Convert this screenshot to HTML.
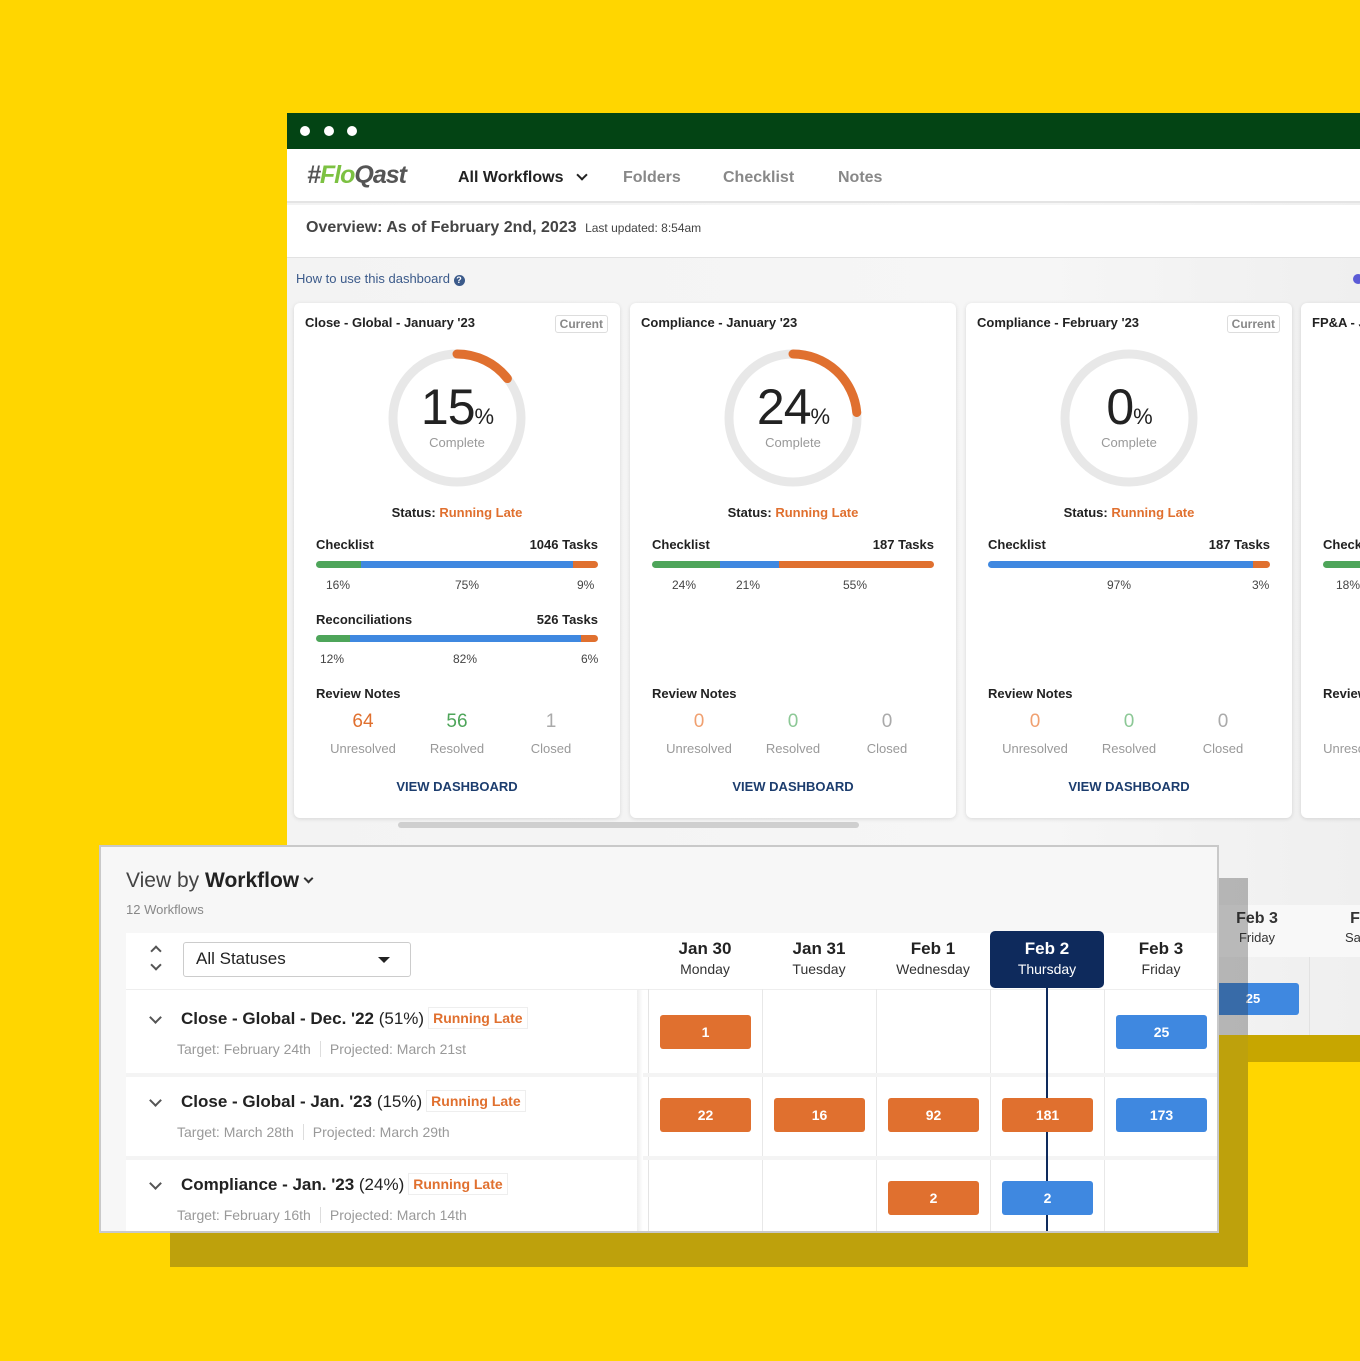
<!DOCTYPE html>
<html><head><meta charset="utf-8"><style>
*{margin:0;padding:0;box-sizing:border-box}
body{width:1360px;height:1361px;background:#FFD600;font-family:"Liberation Sans",sans-serif;position:relative;overflow:hidden;color:#222}
.a{position:absolute}
.win{left:287px;top:113px;width:1073px;height:922px;background:linear-gradient(90deg,#f3f3f3,#f6f6f6 70%,#efefef);overflow:hidden}
.card{position:absolute;top:190px;width:326px;height:515px;background:#fff;border-radius:6px;box-shadow:0 1px 4px rgba(0,0,0,.12)}
.card .t{position:absolute;left:11px;top:12px;font-size:13px;font-weight:bold;color:#222}
.cur{position:absolute;right:12px;top:12px;font-size:12px;font-weight:bold;color:#888;border:1px solid #ddd;border-radius:3px;padding:1px 4px}
.big{position:absolute;left:0;width:326px;text-align:center;top:75px;font-size:50px;color:#222;letter-spacing:-1px}
.big span{font-size:22px}
.cmp{position:absolute;left:0;width:326px;text-align:center;top:132px;font-size:13px;color:#999}
.st{position:absolute;left:0;width:326px;text-align:center;top:202px;font-size:13px;font-weight:bold;color:#222}
.or{color:#e0702f}
.lbl{position:absolute;left:22px;right:22px;font-size:13px;font-weight:bold;color:#222}
.lbl b{position:absolute;right:0;top:0}
.bar{position:absolute;left:22px;width:282px;height:7px;border-radius:4px;overflow:hidden;display:flex}
.g{background:#4ea55a}.b{background:#3f88e0}.o{background:#e0702f}
.pc{position:absolute;font-size:12px;color:#444}
.num{position:absolute;width:100px;text-align:center;font-size:19px;top:408px}
.nl{position:absolute;width:100px;text-align:center;font-size:13px;color:#999;top:438px}
.vd{position:absolute;left:0;width:326px;text-align:center;top:476px;font-size:13px;font-weight:bold;color:#1c3d6e}
.panel{left:99px;top:845px;width:1120px;height:388px;background:#f7f7f7;border:2px solid #c9c9c9;overflow:hidden}
.col{position:absolute;top:86px;width:114px;text-align:center}
.col .d{font-size:17px;font-weight:bold;color:#222;margin-top:6px}
.col .w{font-size:14px;color:#333;margin-top:2px}
.pill{position:absolute;width:91px;height:34px;border-radius:3px;color:#fff;font-weight:bold;font-size:14px;text-align:center;line-height:34px}
.rt{position:absolute;left:80px;font-size:17px;color:#222}
.rt b{font-weight:bold}
.rl{display:inline-block;font-size:14px;font-weight:bold;color:#e0702f;border:1px solid #eee;padding:2px 4px;margin-left:4px;vertical-align:1px}
.rs{position:absolute;left:76px;font-size:14px;color:#999}
.rs i{font-style:normal;border-left:1px solid #ddd;margin:0 9px}
.chev{position:absolute;left:50px;width:9px;height:9px;border-right:2px solid #555;border-bottom:2px solid #555;transform:rotate(45deg)}
</style></head><body>

<div class="a win">
  <div class="a" style="left:0;top:0;width:1073px;height:36px;background:#034414"></div>
  <div class="a" style="left:13px;top:13px;width:10px;height:10px;border-radius:50%;background:#fff"></div>
  <div class="a" style="left:37px;top:13px;width:10px;height:10px;border-radius:50%;background:#fff"></div>
  <div class="a" style="left:60px;top:13px;width:10px;height:10px;border-radius:50%;background:#fff"></div>
  <div class="a" style="left:0;top:36px;width:1073px;height:54px;background:#fff;border-bottom:2px solid #e4e4e4"></div>
  <div class="a" style="left:20px;top:48px;font-size:25px;font-weight:bold;font-style:italic;letter-spacing:-1px;color:#555">#<span style="color:#7cc142">Flo</span>Qast</div>
  <div class="a" style="left:171px;top:56px;font-size:16px;font-weight:bold;color:#222">All Workflows</div>
  <div class="a" style="left:291px;top:58px;width:8px;height:8px;border-right:2px solid #222;border-bottom:2px solid #222;transform:rotate(45deg)"></div>
  <div class="a" style="left:336px;top:56px;font-size:16px;font-weight:bold;color:#888">Folders</div>
  <div class="a" style="left:436px;top:56px;font-size:16px;font-weight:bold;color:#888">Checklist</div>
  <div class="a" style="left:551px;top:56px;font-size:16px;font-weight:bold;color:#888">Notes</div>
  <div class="a" style="left:0;top:92px;width:1073px;height:53px;background:#fff;border-bottom:1px solid #e2e2e2"></div>
  <div class="a" style="left:19px;top:106px;font-size:16px;font-weight:bold;color:#444">Overview: As of February 2nd, 2023 <span style="font-size:12px;font-weight:normal;color:#444;margin-left:4px">Last updated: 8:54am</span></div>
  <div class="a" style="left:9px;top:158px;font-size:13px;color:#3b5a8a">How to use this dashboard <span style="display:inline-block;width:11px;height:11px;border-radius:50%;background:#3b5a8a;color:#fff;font-size:9px;text-align:center;line-height:11px;font-weight:bold">?</span></div>
  <div class="a" style="left:1066px;top:161px;width:10px;height:10px;border-radius:50%;background:#5b5bd6"></div>

  <!-- card 1 -->
  <div class="card" style="left:7px">
    <div class="t">Close - Global - January '23</div><div class="cur">Current</div>
    <svg class="a" style="left:93px;top:45px" width="140" height="140"><circle cx="70" cy="70" r="64" fill="none" stroke="#e8e8e8" stroke-width="9"/><circle cx="70" cy="70" r="64" fill="none" stroke="#e0702f" stroke-width="9" stroke-linecap="round" stroke-dasharray="58 400" transform="rotate(-90 70 70)"/></svg>
    <div class="big">15<span>%</span></div><div class="cmp">Complete</div>
    <div class="st">Status: <span class="or">Running Late</span></div>
    <div class="lbl" style="top:234px">Checklist<b>1046 Tasks</b></div>
    <div class="bar" style="top:258px"><div class="g" style="width:16%"></div><div class="b" style="width:75%"></div><div class="o" style="width:9%"></div></div>
    <div class="pc" style="left:32px;top:275px">16%</div><div class="pc" style="left:161px;top:275px">75%</div><div class="pc" style="left:283px;top:275px">9%</div>
    <div class="lbl" style="top:309px">Reconciliations<b>526 Tasks</b></div>
    <div class="bar" style="top:332px"><div class="g" style="width:12%"></div><div class="b" style="width:82%"></div><div class="o" style="width:6%"></div></div>
    <div class="pc" style="left:26px;top:349px">12%</div><div class="pc" style="left:159px;top:349px">82%</div><div class="pc" style="left:287px;top:349px">6%</div>
    <div class="lbl" style="top:383px">Review Notes</div>
    <div class="num" style="left:19px;color:#e0702f">64</div><div class="num" style="left:113px;color:#4ea55a">56</div><div class="num" style="left:207px;color:#aaa">1</div>
    <div class="nl" style="left:19px">Unresolved</div><div class="nl" style="left:113px">Resolved</div><div class="nl" style="left:207px">Closed</div>
    <div class="vd">VIEW DASHBOARD</div>
  </div>
  <!-- card 2 -->
  <div class="card" style="left:343px">
    <div class="t">Compliance - January '23</div>
    <svg class="a" style="left:93px;top:45px" width="140" height="140"><circle cx="70" cy="70" r="64" fill="none" stroke="#e8e8e8" stroke-width="9"/><circle cx="70" cy="70" r="64" fill="none" stroke="#e0702f" stroke-width="9" stroke-linecap="round" stroke-dasharray="95 400" transform="rotate(-90 70 70)"/></svg>
    <div class="big">24<span>%</span></div><div class="cmp">Complete</div>
    <div class="st">Status: <span class="or">Running Late</span></div>
    <div class="lbl" style="top:234px">Checklist<b>187 Tasks</b></div>
    <div class="bar" style="top:258px"><div class="g" style="width:24%"></div><div class="b" style="width:21%"></div><div class="o" style="width:55%"></div></div>
    <div class="pc" style="left:42px;top:275px">24%</div><div class="pc" style="left:106px;top:275px">21%</div><div class="pc" style="left:213px;top:275px">55%</div>
    <div class="lbl" style="top:383px">Review Notes</div>
    <div class="num" style="left:19px;color:#f0a070">0</div><div class="num" style="left:113px;color:#8cc896">0</div><div class="num" style="left:207px;color:#aaa">0</div>
    <div class="nl" style="left:19px">Unresolved</div><div class="nl" style="left:113px">Resolved</div><div class="nl" style="left:207px">Closed</div>
    <div class="vd">VIEW DASHBOARD</div>
  </div>
  <!-- card 3 -->
  <div class="card" style="left:679px">
    <div class="t">Compliance - February '23</div><div class="cur">Current</div>
    <svg class="a" style="left:93px;top:45px" width="140" height="140"><circle cx="70" cy="70" r="64" fill="none" stroke="#e8e8e8" stroke-width="9"/></svg>
    <div class="big">0<span>%</span></div><div class="cmp">Complete</div>
    <div class="st">Status: <span class="or">Running Late</span></div>
    <div class="lbl" style="top:234px">Checklist<b>187 Tasks</b></div>
    <div class="bar" style="top:258px"><div class="b" style="width:94%"></div><div class="o" style="width:6%"></div></div>
    <div class="pc" style="left:141px;top:275px">97%</div><div class="pc" style="left:286px;top:275px">3%</div>
    <div class="lbl" style="top:383px">Review Notes</div>
    <div class="num" style="left:19px;color:#f0a070">0</div><div class="num" style="left:113px;color:#8cc896">0</div><div class="num" style="left:207px;color:#aaa">0</div>
    <div class="nl" style="left:19px">Unresolved</div><div class="nl" style="left:113px">Resolved</div><div class="nl" style="left:207px">Closed</div>
    <div class="vd">VIEW DASHBOARD</div>
  </div>
  <!-- card 4 -->
  <div class="card" style="left:1014px">
    <div class="t">FP&amp;A - January '23</div>
    <div class="lbl" style="top:234px">Checklist</div>
    <div class="bar" style="top:258px"><div class="g" style="width:18%"></div><div class="b" style="width:70%"></div></div>
    <div class="pc" style="left:35px;top:275px">18%</div>
    <div class="lbl" style="top:383px">Review Notes</div>
    <div class="nl" style="left:5px">Unresolved</div>
  </div>
  <div class="a" style="left:111px;top:709px;width:461px;height:6px;border-radius:3px;background:#cfcfcf"></div>

  <!-- lower calendar behind -->
  <div class="a" style="left:900px;top:792px;width:173px;height:52px;background:#f8f8f8"></div>
  <div class="a" style="left:912px;top:797px;width:116px;text-align:center;font-size:16px;font-weight:bold;color:#333">Feb 3<div style="font-size:13px;font-weight:normal;margin-top:2px">Friday</div></div>
  <div class="a" style="left:1026px;top:797px;width:116px;text-align:center;font-size:16px;font-weight:bold;color:#333">Feb 4<div style="font-size:13px;font-weight:normal;margin-top:2px">Saturday</div></div>
  <div class="a" style="left:1022px;top:844px;width:1px;height:78px;background:#e2e2e2"></div>
  <div class="a" style="left:920px;top:870px;width:92px;height:32px;border-radius:3px;background:#3f88e0;color:#fff;font-weight:bold;font-size:13px;text-align:center;line-height:32px">25</div>
</div>
<div class="a" style="left:1248px;top:1035px;width:112px;height:27px;background:rgba(70,55,0,.3)"></div>
<div class="a" style="left:170px;top:878px;width:1078px;height:389px;background:rgba(40,40,40,.3)"></div>

<!-- bottom panel -->
<div class="a panel">
  <div class="a" style="left:25px;top:22px;font-size:21px;color:#444">View by <b style="color:#222">Workflow</b> <span style="display:inline-block;width:7px;height:7px;border-right:2px solid #333;border-bottom:2px solid #333;transform:rotate(45deg);vertical-align:5px"></span></div>
  <div class="a" style="left:25px;top:55px;font-size:13px;color:#888">12 Workflows</div>
  <div class="a" style="left:25px;top:86px;width:1095px;height:300px;background:#fff"></div>
  <div class="a" style="left:51px;top:100px;width:8px;height:8px;border-left:2px solid #555;border-top:2px solid #555;transform:rotate(45deg)"></div>
  <div class="a" style="left:51px;top:114px;width:8px;height:8px;border-right:2px solid #555;border-bottom:2px solid #555;transform:rotate(45deg)"></div>
  <div class="a" style="left:82px;top:95px;width:228px;height:35px;border:1px solid #ccc;border-radius:3px;font-size:17px;color:#222;padding:6px 12px">All Statuses<span style="position:absolute;right:20px;top:14px;border-left:6px solid transparent;border-right:6px solid transparent;border-top:6px solid #222"></span></div>
  <div class="a" style="left:25px;top:142px;width:1095px;height:1px;background:#eee"></div>
  <!-- grid -->
  <div class="a" style="left:547px;top:142px;width:1px;height:250px;background:#e4e4e4"></div>
  <div class="a" style="left:661px;top:142px;width:1px;height:250px;background:#e8e8e8"></div>
  <div class="a" style="left:775px;top:142px;width:1px;height:250px;background:#e8e8e8"></div>
  <div class="a" style="left:889px;top:142px;width:1px;height:250px;background:#e8e8e8"></div>
  <div class="a" style="left:1003px;top:142px;width:1px;height:250px;background:#e8e8e8"></div>
  <div class="a" style="left:25px;top:226px;width:1095px;height:4px;background:#f4f4f4"></div>
  <div class="a" style="left:25px;top:309px;width:1095px;height:4px;background:#f4f4f4"></div>
  <div class="a" style="left:536px;top:143px;width:6px;height:250px;background:linear-gradient(90deg,#eee,#fff)"></div>
  <div class="col" style="left:547px"><div class="d">Jan 30</div><div class="w">Monday</div></div>
  <div class="col" style="left:661px"><div class="d">Jan 31</div><div class="w">Tuesday</div></div>
  <div class="col" style="left:775px"><div class="d">Feb 1</div><div class="w">Wednesday</div></div>
  <div class="a" style="left:889px;top:84px;width:114px;height:57px;background:#0e2a5c;border-radius:5px"></div>
  <div class="col" style="left:889px"><div class="d" style="color:#fff">Feb 2</div><div class="w" style="color:#fff">Thursday</div></div>
  <div class="col" style="left:1003px"><div class="d">Feb 3</div><div class="w">Friday</div></div>
  <div class="a" style="left:945px;top:141px;width:2px;height:250px;background:#0e2a5c"></div>
  <!-- rows -->
  <div class="chev" style="top:166px"></div>
  <div class="rt" style="top:160px"><b>Close - Global - Dec. '22</b> (51%)<span class="rl">Running Late</span></div>
  <div class="rs" style="top:194px">Target: February 24th<i></i>Projected: March 21st</div>
  <div class="chev" style="top:249px"></div>
  <div class="rt" style="top:243px"><b>Close - Global - Jan. '23</b> (15%)<span class="rl">Running Late</span></div>
  <div class="rs" style="top:277px">Target: March 28th<i></i>Projected: March 29th</div>
  <div class="chev" style="top:332px"></div>
  <div class="rt" style="top:326px"><b>Compliance - Jan. '23</b> (24%)<span class="rl">Running Late</span></div>
  <div class="rs" style="top:360px">Target: February 16th<i></i>Projected: March 14th</div>
  <div class="pill o" style="left:559px;top:168px">1</div>
  <div class="pill b" style="left:1015px;top:168px">25</div>
  <div class="pill o" style="left:559px;top:251px">22</div>
  <div class="pill o" style="left:673px;top:251px">16</div>
  <div class="pill o" style="left:787px;top:251px">92</div>
  <div class="pill o" style="left:901px;top:251px">181</div>
  <div class="pill b" style="left:1015px;top:251px">173</div>
  <div class="pill o" style="left:787px;top:334px">2</div>
  <div class="pill b" style="left:901px;top:334px">2</div>
</div>
</body></html>
